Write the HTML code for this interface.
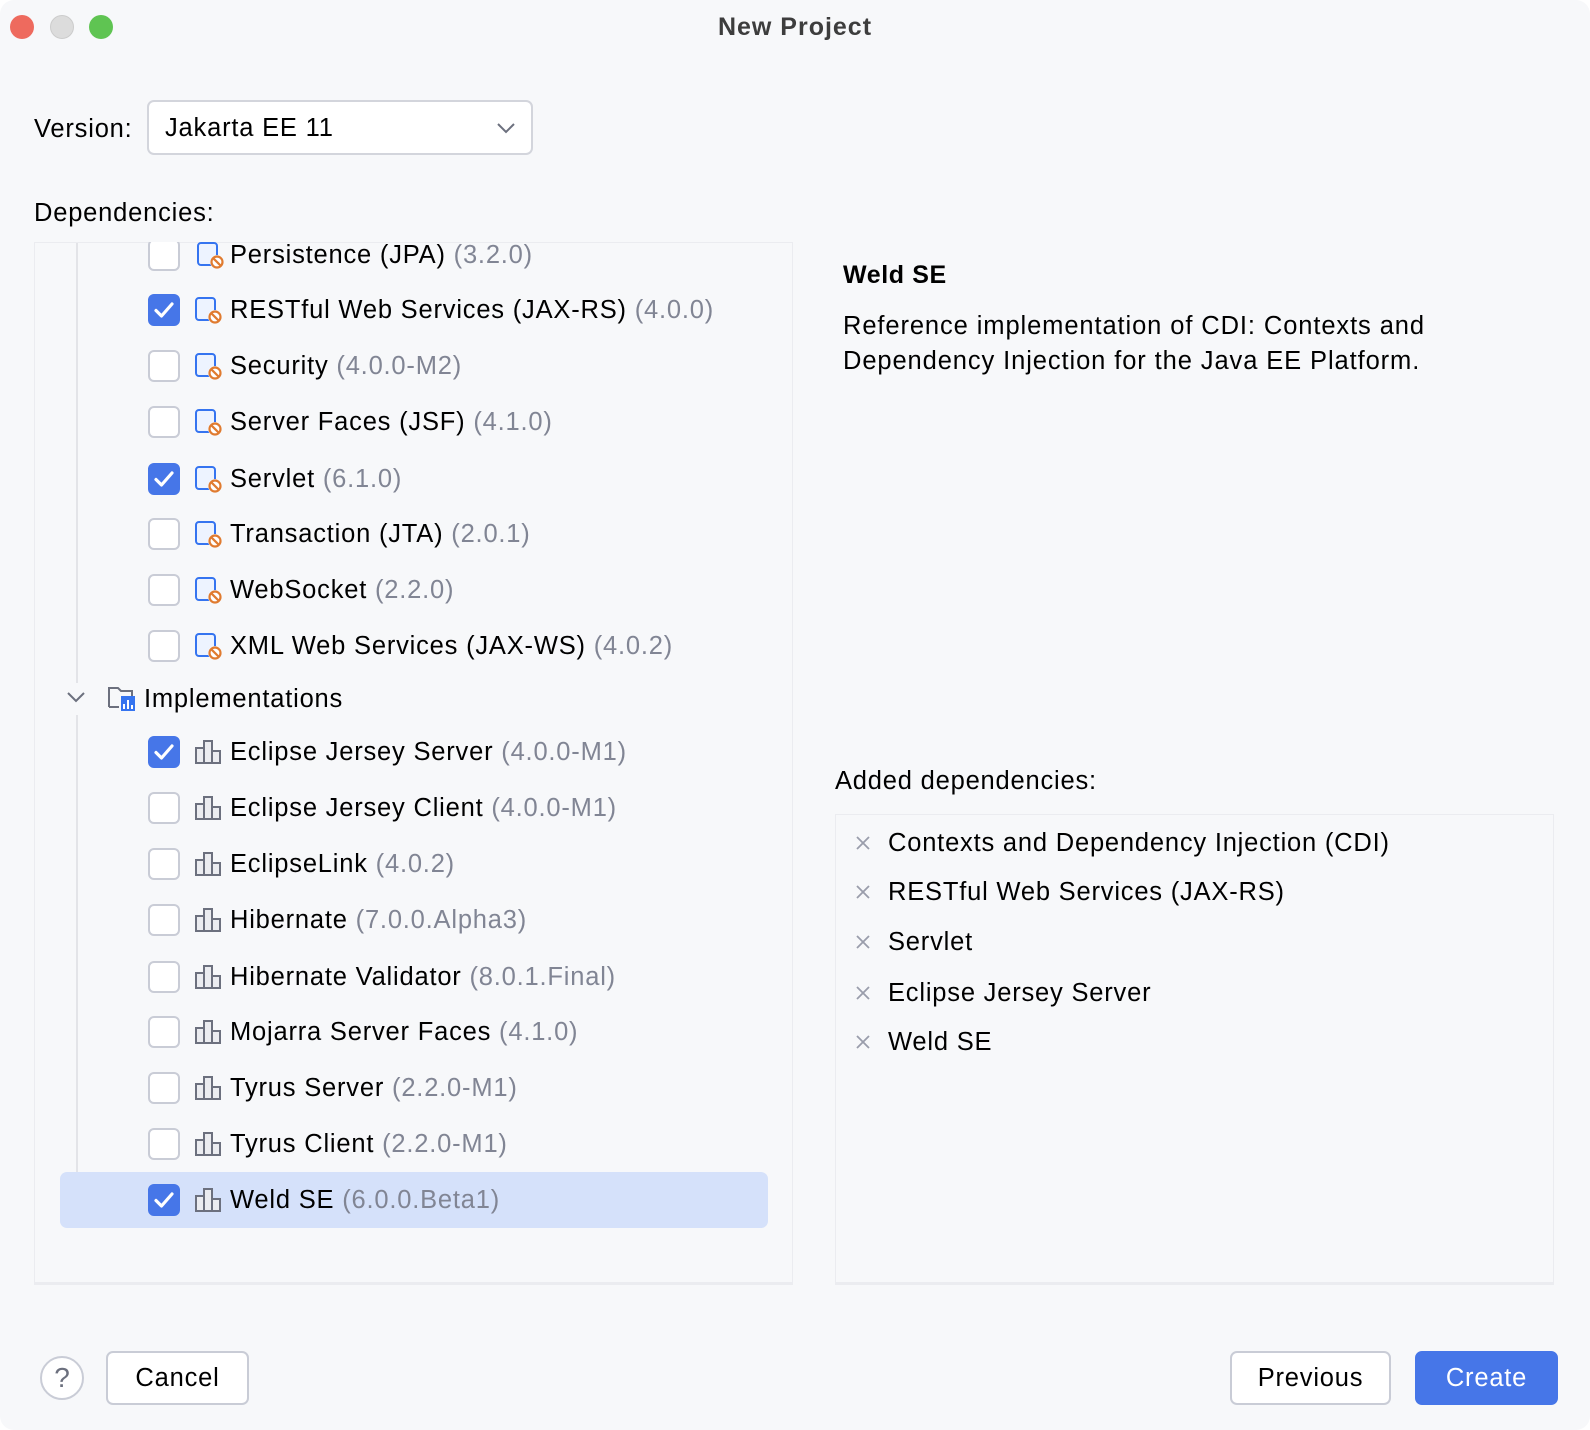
<!DOCTYPE html>
<html><head><meta charset="utf-8"><style>
*{margin:0;padding:0;box-sizing:border-box}
body{width:1590px;height:1430px;background:#fff;font-family:"Liberation Sans",sans-serif;color:#000;position:relative;overflow:hidden}
.win{position:absolute;left:0;top:0;width:1590px;height:1430px;background:#f7f8fa;border-radius:14px}
.a{position:absolute;white-space:nowrap}
.t{font-size:25.5px;line-height:30px;letter-spacing:0.8px}
.g{color:#818594}
.cb{position:absolute;left:148px;width:32px;height:32px;border:2px solid #c9ccd6;border-radius:6px;background:#fff}
.cb.on{background:#4676e8;border-color:#4676e8}
.btn{position:absolute;height:54px;border:2px solid #c9ccd6;border-radius:7px;background:#fff;font-size:25.5px;letter-spacing:0.8px;text-align:center;line-height:50px}
</style></head><body><div class="win">
<div class="a" style="left:10px;top:15px;width:24px;height:24px;border-radius:50%;background:#ee6a5e"></div>
<div class="a" style="left:50px;top:15px;width:24px;height:24px;border-radius:50%;background:#dcdcdc;border:1px solid #ccc"></div>
<div class="a" style="left:89px;top:15px;width:24px;height:24px;border-radius:50%;background:#5fc452"></div>
<div class="a" style="left:0;width:1590px;top:12px;text-align:center;font-size:25px;font-weight:bold;color:#3d3d3d;line-height:30px;letter-spacing:1px">New Project</div>

<div class="a t" style="left:34px;top:114px">Version:</div>
<div class="a" style="left:147px;top:100px;width:386px;height:55px;border:2px solid #d3d5dc;border-radius:7px;background:#fff"></div>
<div class="a t" style="left:165px;top:113px">Jakarta EE 11</div>
<svg class="a" style="left:496px;top:122px" width="20" height="12"><path d="M2 2l8 8 8-8" stroke="#6c707e" stroke-width="2" fill="none"/></svg>

<div class="a t" style="left:34px;top:198px">Dependencies:</div>
<div class="a" style="left:34px;top:242px;width:759px;height:1043px;border:1px solid #ebecf0;border-bottom:3px solid #ebecf0"></div>
<div class="a" style="left:76px;top:243px;width:2px;height:440px;background:#e3e4e8"></div>
<div class="a" style="left:76px;top:715px;width:2px;height:512px;background:#e3e4e8"></div>
<div class="a" style="left:60px;top:1172px;width:708px;height:56px;background:#d5e1fa;border-radius:7px"></div>

<div id="rows"></div>

<div class="a" style="left:843px;top:260px;font-size:25px;font-weight:bold;line-height:30px;letter-spacing:0.6px">Weld SE</div>
<div class="a t" style="left:843px;top:309px;line-height:35px;letter-spacing:0.9px">Reference implementation of CDI: Contexts and<br>Dependency Injection for the Java EE Platform.</div>

<div class="a t" style="left:835px;top:766px">Added dependencies:</div>
<div class="a" style="left:835px;top:814px;width:719px;height:471px;border:1px solid #ebecf0;border-bottom:3px solid #ebecf0"></div>
<div id="added"></div>

<div class="a" style="left:40px;top:1356px;width:44px;height:44px;border:2px solid #c9ccd6;border-radius:50%;background:#fff;text-align:center;font-size:28px;line-height:40px;color:#6c707e">?</div>
<div class="btn" style="left:106px;top:1351px;width:143px">Cancel</div>
<div class="btn" style="left:1230px;top:1351px;width:161px">Previous</div>
<div class="btn" style="left:1415px;top:1351px;width:143px;background:#4676e8;border-color:#4676e8;color:#fff">Create</div>
</div>
<script>
var ck='<svg width="28" height="28" style="position:absolute;left:0;top:0"><path d="M6 14.5l5.5 5.5L22 8" stroke="#fff" stroke-width="3.2" fill="none" stroke-linecap="round" stroke-linejoin="round"/></svg>';
var spec='<svg width="30" height="30"><rect x="2" y="3" width="19" height="22" rx="3" fill="#edf3ff" stroke="#3574f0" stroke-width="2"/><circle cx="21" cy="22" r="7" fill="#f7f8fa"/><circle cx="21" cy="22" r="5.5" fill="#fff" stroke="#e07b30" stroke-width="2.2"/><path d="M17.2 18.2l7.6 7.6" stroke="#e07b30" stroke-width="2.2"/></svg>';
var lib='<svg width="30" height="30"><g fill="#ebecf0" stroke="#6c707e" stroke-width="2"><rect x="2" y="11" width="8" height="15"/><rect x="10" y="4" width="8" height="22"/><rect x="18" y="14" width="8" height="12"/></g></svg>';
var rows=[
["Persistence (JPA)","(3.2.0)",254.5,0,0],
["RESTful Web Services (JAX-RS)","(4.0.0)",310.3,1,0],
["Security","(4.0.0-M2)",366,0,0],
["Server Faces (JSF)","(4.1.0)",421.8,0,0],
["Servlet","(6.1.0)",478.6,1,0],
["Transaction (JTA)","(2.0.1)",534.4,0,0],
["WebSocket","(2.2.0)",590.1,0,0],
["XML Web Services (JAX-WS)","(4.0.2)",645.9,0,0],
["Eclipse Jersey Server","(4.0.0-M1)",752.4,1,1],
["Eclipse Jersey Client","(4.0.0-M1)",808.2,0,1],
["EclipseLink","(4.0.2)",863.9,0,1],
["Hibernate","(7.0.0.Alpha3)",919.7,0,1],
["Hibernate Validator","(8.0.1.Final)",976.5,0,1],
["Mojarra Server Faces","(4.1.0)",1032.3,0,1],
["Tyrus Server","(2.2.0-M1)",1088,0,1],
["Tyrus Client","(2.2.0-M1)",1143.8,0,1],
["Weld SE","(6.0.0.Beta1)",1199.6,1,1]];
var h='';
rows.forEach(function(r){var y=r[2];
 if(y<260){h+='<div class="a" style="left:140px;top:242px;width:100px;height:'+(y+16-242)+'px;overflow:hidden"><div class="cb" style="left:8px;top:'+(y-16-242)+'px"></div><div class="a" style="left:56px;top:'+(y-15-242)+'px">'+spec+'</div></div>';}
 else{h+='<div class="cb'+(r[3]?' on':'')+'" style="top:'+(y-16)+'px">'+(r[3]?ck:'')+'</div><div class="a" style="left:194px;top:'+(y-15)+'px">'+(r[4]?lib:spec)+'</div>';}
 h+='<div class="a t" style="left:230px;top:'+(y-15)+'px;'+(y<260?'clip-path:inset(3px 0 0 0)':'')+'">'+r[0]+' <span class="g">'+r[1]+'</span></div>';});
h+='<svg class="a" style="left:66px;top:690px" width="20" height="14"><path d="M2 3l8 8 8-8" stroke="#6c707e" stroke-width="2" fill="none"/></svg>';
h+='<svg class="a" style="left:107px;top:683px" width="32" height="30"><path d="M2 24V5h9l3 3h11v6" stroke="#6c707e" stroke-width="2" fill="#f7f8fa"/><path d="M2 24h10" stroke="#6c707e" stroke-width="2"/><rect x="14" y="13" width="14" height="15" fill="#3574f0"/><path d="M17 26v-5M21 26v-9M25 26v-4" stroke="#fff" stroke-width="2"/></svg>';
h+='<div class="a t" style="left:144px;top:684px">Implementations</div>';
document.getElementById('rows').innerHTML=h;
var ad=[["Contexts and Dependency Injection (CDI)",843],["RESTful Web Services (JAX-RS)",892],["Servlet",942],["Eclipse Jersey Server",993],["Weld SE",1042]];
h='';ad.forEach(function(a){h+='<svg class="a" style="left:855px;top:'+(a[1]-8)+'px" width="16" height="16"><path d="M2 2l12 12M14 2L2 14" stroke="#9a9dab" stroke-width="1.8"/></svg><div class="a t" style="left:888px;top:'+(a[1]-15)+'px">'+a[0]+'</div>';});
document.getElementById('added').innerHTML=h;
</script>
</body></html>
